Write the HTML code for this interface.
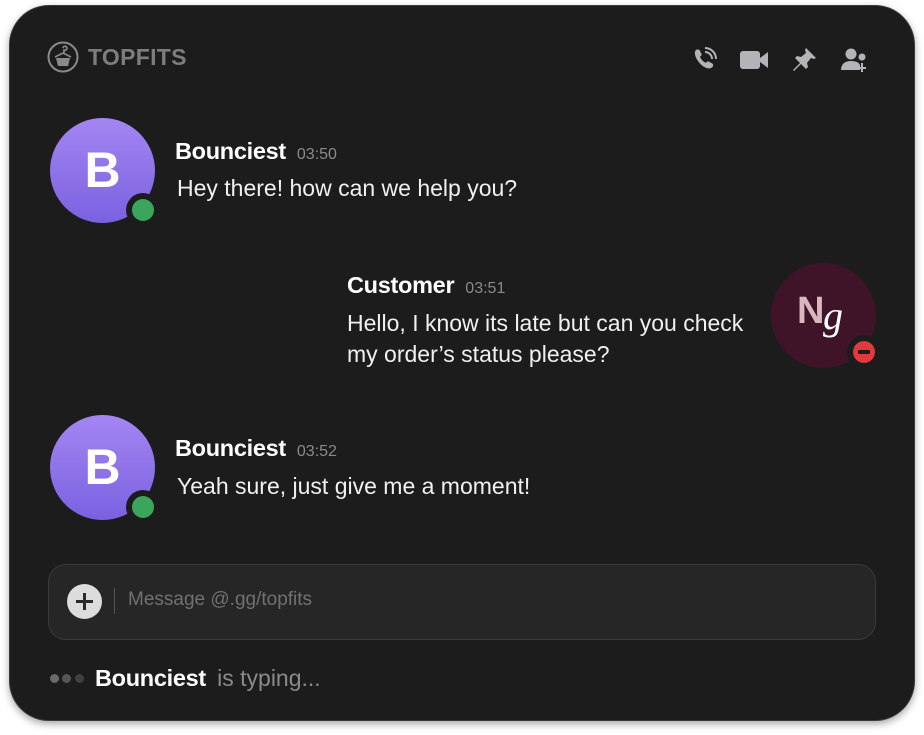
<!DOCTYPE html>
<html><head><meta charset="utf-8"><style>
*{margin:0;padding:0;box-sizing:border-box}
body{width:924px;height:735px;background:#fff;font-family:"Liberation Sans",sans-serif;position:relative;overflow:hidden}
.card{position:absolute;left:9px;top:5px;width:906px;height:716px;background:#1c1c1c;border-radius:40px;box-shadow:0 3px 8px rgba(0,0,0,.35);border:1px solid #3a3a3a}
.abs{position:absolute}
.av{position:absolute;width:105px;height:105px;border-radius:50%;background:linear-gradient(#a486f2,#7a61e0);color:#fff;font-weight:bold;font-size:50px;text-align:center;line-height:105px}
.dot{position:absolute;width:34px;height:34px;border-radius:50%;background:#1c1c1c}
.dot i{position:absolute;left:6px;top:6px;width:22px;height:22px;border-radius:50%;background:#3ba55c}
.name{position:absolute;color:#fff;font-weight:bold;font-size:23.5px;letter-spacing:-0.3px}
.time{color:#8a8a8a;font-weight:normal;font-size:16px;margin-left:11px;letter-spacing:0}
.msg{position:absolute;color:#f0f0f0;font-size:23px;line-height:31px}
</style></head><body>
<div class="card"></div>
<svg class="abs" style="left:47px;top:41px" width="32" height="32" viewBox="0 0 32 32"><circle cx="16" cy="16" r="14.5" fill="none" stroke="#8a8a8a" stroke-width="2"/><path d="M16 7a2 2 0 1 1 1 2l0 3M8 16l8-4 8 4" fill="none" stroke="#8a8a8a" stroke-width="1.6"/><path d="M9 17h14l-2 8h-10z" fill="#8a8a8a"/></svg>
<div class="abs" style="left:88px;top:44px;color:#7d7d7d;font-weight:bold;font-size:23px;letter-spacing:0.3px">TOPFITS</div>
<svg class="abs" style="left:691px;top:47px" width="26" height="26" viewBox="0 0 26 26" fill="#b3b3b8"><path d="M5 3c1.5-1 3-1 4 1l1.5 3c.5 1-.5 2-1.5 2.5 1 3 3 5 6 6.5.5-1 1.5-2 2.5-1.5l3 1.5c2 1 2 2.5 1 4-3 3-8 1-12-3S2 6 5 3z"/><path d="M14 5a7 7 0 0 1 7 7M14 1a11 11 0 0 1 11 11" fill="none" stroke="#b3b3b8" stroke-width="2"/></svg>
<svg class="abs" style="left:740px;top:50px" width="29" height="20" viewBox="0 0 29 20" fill="#b3b3b8"><rect x="0" y="1" width="20" height="18" rx="3"/><path d="M20 8l8-6v16l-8-6z"/></svg>
<svg class="abs" style="left:791px;top:47px" width="26" height="26" viewBox="0 0 26 26" fill="#b3b3b8"><path d="M15 1l10 10-2 1-3-1-4 5 1 4-2 2-5-5-7 7-1-1 7-7-5-5 2-2 4 1 5-4-1-3z"/></svg>
<svg class="abs" style="left:841px;top:47px" width="30" height="26" viewBox="0 0 30 26" fill="#b3b3b8"><circle cx="10" cy="7" r="5.5"/><path d="M0 23c0-6 4-9 10-9s8 2 9 4v5z"/><circle cx="21" cy="10" r="3.5"/><path d="M21 16v9M17 21h8" stroke="#b3b3b8" stroke-width="2"/></svg>
<div class="av" style="left:50px;top:118px">B</div>
<div class="dot" style="left:126px;top:193px"><i></i></div>
<div class="name" style="left:175px;top:138px">Bounciest<span class="time">03:50</span></div>
<div class="msg" style="left:177px;top:173px">Hey there! how can we help you?</div>
<div class="name" style="left:347px;top:272px">Customer<span class="time">03:51</span></div>
<div class="msg" style="left:347px;top:308px">Hello, I know its late but can you check<br>my order’s status please?</div>
<div class="abs" style="left:771px;top:263px;width:105px;height:105px;border-radius:50%;background:#3f1428"></div>
<div class="abs" style="left:797px;top:290px;font-weight:bold;font-size:38px;color:#d8b8bc">N</div>
<div class="abs" style="left:823px;top:292px;font-style:italic;font-size:40px;color:#fff;font-family:'Liberation Serif',serif">g</div>
<div class="dot" style="left:847px;top:335px"><i style="background:#e0393e"></i><b class="abs" style="left:11px;top:15px;width:12px;height:4px;background:#1c1c1c;border-radius:1px"></b></div>
<div class="av" style="left:50px;top:415px">B</div>
<div class="dot" style="left:126px;top:490px"><i></i></div>
<div class="name" style="left:175px;top:435px">Bounciest<span class="time">03:52</span></div>
<div class="msg" style="left:177px;top:471px">Yeah sure, just give me a moment!</div>
<div class="abs" style="left:48px;top:564px;width:828px;height:76px;border-radius:18px;background:#262626;border:1px solid #3a3a3a"></div>
<div class="abs" style="left:67px;top:584px;width:35px;height:35px;border-radius:50%;background:#dcdcdc"></div>
<div class="abs" style="left:76px;top:600px;width:17px;height:3px;background:#2a2a2a"></div>
<div class="abs" style="left:83px;top:593px;width:3px;height:17px;background:#2a2a2a"></div>
<div class="abs" style="left:114px;top:588px;width:1px;height:26px;background:#555"></div>
<div class="abs" style="left:128px;top:589px;color:#707070;font-size:19px">Message @.gg/topfits</div>
<div class="abs" style="left:50px;top:674px;width:9px;height:9px;border-radius:50%;background:#6a6a6a"></div>
<div class="abs" style="left:62px;top:674px;width:9px;height:9px;border-radius:50%;background:#555"></div>
<div class="abs" style="left:75px;top:674px;width:9px;height:9px;border-radius:50%;background:#404040"></div>
<div class="abs" style="left:95px;top:665px;color:#fff;font-weight:bold;font-size:23.5px;letter-spacing:-0.3px">Bounciest <span style="font-weight:normal;color:#8a8a8a;margin-left:5px;letter-spacing:0;font-size:23px">is typing...</span></div>
</body></html>
